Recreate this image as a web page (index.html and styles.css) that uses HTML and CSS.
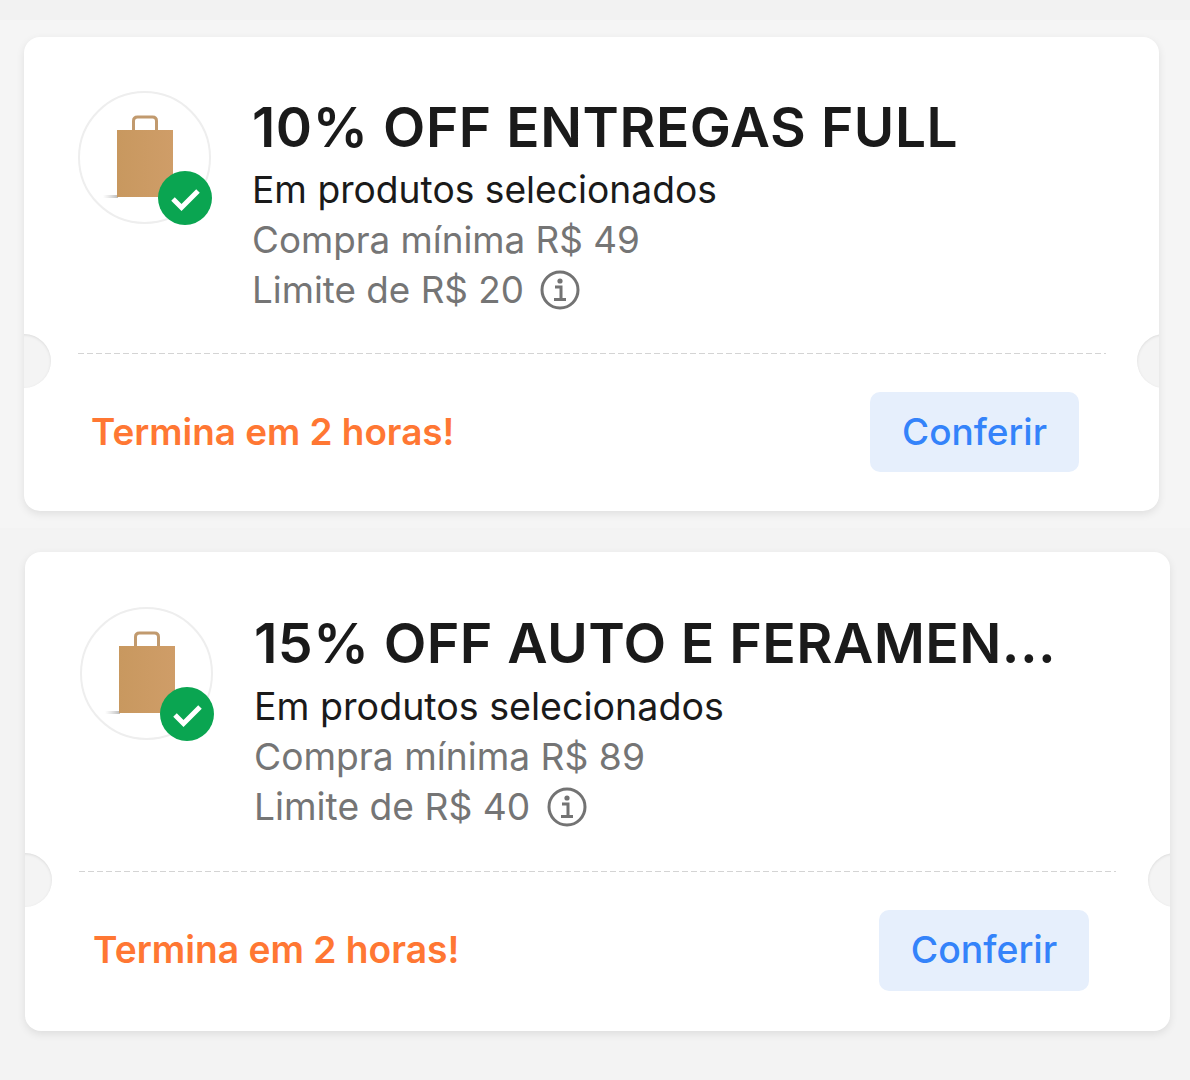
FILE: index.html
```html
<!DOCTYPE html>
<html lang="en">
<head>
  <meta charset="UTF-8">
  <title>Cupons</title>
  <link rel="stylesheet" href="styles.css">
</head>
<body>
  <!-- === COUPON LIST === -->
  <main class="coupons">
    <article class="coupon coupon-first">
      <div class="coupon-top">
        <div class="thumb">
          <svg class="bag" viewBox="0 0 56 84">
            <defs>
              <linearGradient id="kraft" x1="0" y1="0" x2="1" y2="0">
                <stop offset="0" stop-color="#c8985f"/>
                <stop offset="1" stop-color="#cf9d68"/>
              </linearGradient>
              <linearGradient id="floor" x1="0" y1="0" x2="1" y2="0">
                <stop offset="0" stop-color="#ccc" stop-opacity="0"/>
                <stop offset="1" stop-color="#bbb"/>
              </linearGradient>
            </defs>
            <path d="M-14 80h15v3h-15z" fill="url(#floor)"/>
            <path d="M16.500 17V6q0-4 4-4h15q4 0 4 4v11" fill="none" stroke="#c19a6e" stroke-width="3"/>
            <path d="M0 15h56v67H0z" fill="url(#kraft)"/>
          </svg>
          <svg class="check" viewBox="0 0 54 54">
            <circle cx="27" cy="27" r="27" fill="#0aa551"/>
            <path d="M15 28l8.500 8.500L40 20" fill="none" stroke="#fff" stroke-width="5"/>
          </svg>
        </div>
        <div class="info">
          <h2 class="title">10% OFF ENTREGAS FULL</h2>
          <p class="sub">Em produtos selecionados</p>
          <p class="detail">Compra mínima R$ 49</p>
          <p class="detail">Limite de R$ 20
            <svg class="info-icon" viewBox="0 0 40 40">
              <circle cx="20" cy="20" r="18" fill="none" stroke="#737373" stroke-width="3"/>
              <circle cx="20" cy="11" r="2.6" fill="#737373"/>
              <path d="M15 17h6v12M14 29.500h12" fill="none" stroke="#737373" stroke-width="3"/>
            </svg>
          </p>
        </div>
      </div>
      <div class="coupon-bottom">
        <span class="ends">Termina em 2 horas!</span>
        <button class="check-btn">Conferir</button>
      </div>
    </article>

    <article class="coupon coupon-second">
      <div class="coupon-top">
        <div class="thumb">
          <svg class="bag" viewBox="0 0 56 84">
            <path d="M-14 80h15v3h-15z" fill="url(#floor)"/>
            <path d="M16.500 17V6q0-4 4-4h15q4 0 4 4v11" fill="none" stroke="#c19a6e" stroke-width="3"/>
            <path d="M0 15h56v67H0z" fill="url(#kraft)"/>
          </svg>
          <svg class="check" viewBox="0 0 54 54">
            <circle cx="27" cy="27" r="27" fill="#0aa551"/>
            <path d="M15 28l8.500 8.500L40 20" fill="none" stroke="#fff" stroke-width="5"/>
          </svg>
        </div>
        <div class="info">
          <h2 class="title">15% OFF AUTO E FERAMEN...</h2>
          <p class="sub">Em produtos selecionados</p>
          <p class="detail">Compra mínima R$ 89</p>
          <p class="detail">Limite de R$ 40
            <svg class="info-icon" viewBox="0 0 40 40">
              <circle cx="20" cy="20" r="18" fill="none" stroke="#737373" stroke-width="3"/>
              <circle cx="20" cy="11" r="2.6" fill="#737373"/>
              <path d="M15 17h6v12M14 29.500h12" fill="none" stroke="#737373" stroke-width="3"/>
            </svg>
          </p>
        </div>
      </div>
      <div class="coupon-bottom">
        <span class="ends">Termina em 2 horas!</span>
        <button class="check-btn">Conferir</button>
      </div>
    </article>
  </main>
</body>
</html>
```

FILE: styles.css
```css
:root {
  --bg-color: #f5f5f5;
  --text-color: #1a1a1a;
  --muted-color: #757575;
}

body {
  background: linear-gradient(#f2f2f2 20px, var(--bg-color) 20px, var(--bg-color) 528px, #f3f3f3 528px);
  color: var(--text-color);
  font-family: "Inter", "Liberation Sans", sans-serif;
  margin: 0;
  overflow: hidden;
}

.coupons {
  display: flex;
  flex-direction: column;
  align-items: flex-start;
  gap: 41px;
  height: 1080px;
  padding: 37px 0 0 24px;
  box-sizing: border-box;
}

.coupon {
  position: relative;
  background: #fff;
  border-radius: 16px;
  box-shadow: 0 3px 8px rgba(0, 0, 0, 0.09);
  box-sizing: border-box;
}

.coupon-first {
  width: 1135px;
  height: 474px;
  padding: 54px 53px 0 54px;
}

.coupon-second {
  width: 1145px;
  height: 479px;
  margin-left: 1px;
  padding: 55px 54px 0 55px;
}

/* === TICKET NOTCHES === */
.coupon::before,
.coupon::after {
  content: "";
  position: absolute;
  top: 297px;
  width: 54px;
  height: 54px;
  border-radius: 50%;
  background: #f4f4f4;
  box-shadow: inset 0 1px 3px rgba(0, 0, 0, 0.1);
}

.coupon-second::before,
.coupon-second::after {
  top: 301px;
}

.coupon::before {
  left: -27px;
  clip-path: inset(-2px -2px -2px 27px);
}

.coupon::after {
  right: -32px;
  clip-path: inset(-2px 32px -2px -2px);
}

/* dashes are longer than what border-style: dashed draws */
.coupon-top {
  display: flex;
  gap: 41px;
  height: 263px;
  box-sizing: border-box;
  background: repeating-linear-gradient(90deg, #d4d4d4 0 6px, transparent 6px 9px) bottom / 100% 1px no-repeat;
}

.coupon-second .coupon-top {
  height: 265px;
  margin-left: -1px;
}

.thumb {
  position: relative;
  flex: none;
  display: flex;
  align-items: center;
  justify-content: center;
  width: 129px;
  height: 129px;
  border: 2px solid #eee;
  border-radius: 50%;
  box-sizing: content-box;
}

.coupon-second .thumb {
  margin-left: 1px;
}

.bag {
  width: 56px;
  height: 84px;
  margin-top: -2px;
  overflow: visible;
}

.check {
  position: absolute;
  right: -3px;
  bottom: -3px;
  width: 54px;
  height: 54px;
}

.title {
  margin: 0 0 2px;
  font-size: 55px;
  line-height: 72px;
  font-weight: 600;
  letter-spacing: 0.6px;
  white-space: nowrap;
}

.coupon-second .title {
  font-size: 55.5px;
  letter-spacing: 0.4px;
}

.sub,
.detail {
  margin: 0;
  font-size: 36.8px;
  line-height: 50px;
}

.sub {
  font-size: 37.2px;
}

.coupon-second .sub {
  font-size: 37.6px;
  line-height: 51px;
}

.coupon-second .detail {
  font-size: 37.2px;
}

.detail {
  color: var(--muted-color);
}

.info-icon {
  width: 40px;
  height: 40px;
  margin-left: 6px;
  vertical-align: -7px;
}

.coupon-bottom {
  display: flex;
  align-items: center;
  justify-content: space-between;
  padding: 38px 27px 0 13px;
}

.ends {
  padding-bottom: 2px;
  color: #ff7733;
  font-size: 36.9px;
  font-weight: 600;
}

.coupon-second .ends {
  font-size: 37.2px;
}

.check-btn {
  width: 209px;
  height: 80px;
  padding: 0 0 2px;
  background: #e6effc;
  color: #3483fa;
  border: 0;
  border-radius: 10px;
  font-family: inherit;
  font-size: 37px;
  font-weight: 500;
}

.coupon-second .check-btn {
  width: 210px;
  height: 81px;
  font-size: 37.4px;
}
```
